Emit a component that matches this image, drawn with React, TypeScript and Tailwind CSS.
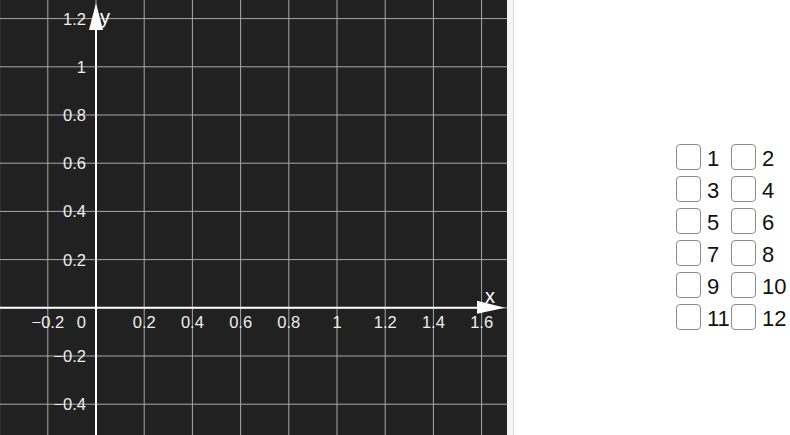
import React from "react";

const X0 = 96;
const Y0 = 307.8;
const S = 48.2;

const xs = (v: number) => X0 + v * (S / 0.2);
const ys = (v: number) => Y0 - v * (S / 0.2);

function Graph() {
  const vLines: number[] = [];
  for (let i = -2; i <= 9; i++) vLines.push(X0 + i * S);
  const hLines: number[] = [];
  for (let i = -3; i <= 7; i++) hLines.push(Y0 - i * S);
  const xLabels = [
    { t: "\u22120.2", v: -0.2 },
    { t: "0.2", v: 0.2 },
    { t: "0.4", v: 0.4 },
    { t: "0.6", v: 0.6 },
    { t: "0.8", v: 0.8 },
    { t: "1", v: 1 },
    { t: "1.2", v: 1.2 },
    { t: "1.4", v: 1.4 },
    { t: "1.6", v: 1.6 },
  ];
  const yLabels = [
    { t: "1.2", v: 1.2 },
    { t: "1", v: 1 },
    { t: "0.8", v: 0.8 },
    { t: "0.6", v: 0.6 },
    { t: "0.4", v: 0.4 },
    { t: "0.2", v: 0.2 },
    { t: "\u22120.2", v: -0.2 },
    { t: "\u22120.4", v: -0.4 },
  ];
  return (
    <svg width={507} height={435} className="block shrink-0" style={{ fontFamily: '"Liberation Sans", Arial, sans-serif' }}>
      <rect x={0} y={0} width={507} height={435} fill="#212121" />
      {vLines.map((x, i) => (
        <line key={"v" + i} x1={x} y1={0} x2={x} y2={435} stroke="#a8a8a8" strokeWidth={1} />
      ))}
      {hLines.map((y, i) => (
        <line key={"h" + i} x1={0} y1={y} x2={507} y2={y} stroke="#a8a8a8" strokeWidth={1} />
      ))}
      <line x1={X0} y1={435} x2={X0} y2={20} stroke="#ffffff" strokeWidth={2} />
      <polygon points={`${X0},3 ${X0 - 7},30 ${X0 + 7},30`} fill="#ffffff" />
      <line x1={0} y1={Y0} x2={490} y2={Y0} stroke="#ffffff" strokeWidth={2} />
      <polygon points={`505,${Y0} 477,${Y0 - 7} 477,${Y0 + 6}`} fill="#ffffff" />
      <text x={100} y={24} fill="#ffffff" fontSize={20}>y</text>
      <text x={485} y={303} fill="#ffffff" fontSize={20}>x</text>
      {xLabels.map((l) => (
        <text key={l.t} x={xs(l.v)} y={328} fill="#eeeeee" fontSize={16.5} textAnchor="middle">
          {l.t}
        </text>
      ))}
      <text x={86} y={328} fill="#eeeeee" fontSize={16.5} textAnchor="end">0</text>
      {yLabels.map((l) => (
        <text key={"y" + l.t} x={86} y={ys(l.v) + 6} fill="#eeeeee" fontSize={16.5} textAnchor="end">
          {l.t}
        </text>
      ))}
    </svg>
  );
}

export default function App() {
  const items = Array.from({ length: 12 }, (_, i) => i + 1);
  return (
    <div className="flex h-[435px] w-[790px] overflow-hidden bg-white" style={{ fontFamily: '"Liberation Sans", Arial, sans-serif' }}>
      <Graph />
      <div className="h-full w-[7px] shrink-0 border-r border-[#dcdcdc] bg-[#f5f5f5]" />
      <div className="flex-1 pl-[162px] pt-[141px]">
        <div className="grid grid-cols-[55px_55px]">
          {items.map((n) => (
            <div key={n} className="flex h-8 items-center">
              <div className="h-[26px] w-[25px] shrink-0 rounded-[4px] border border-[#8c8c8c] bg-white" />
              <span className="ml-[6px] mt-[4px] text-[22px] leading-none text-[#111111]">{n}</span>
            </div>
          ))}
        </div>
      </div>
    </div>
  );
}
